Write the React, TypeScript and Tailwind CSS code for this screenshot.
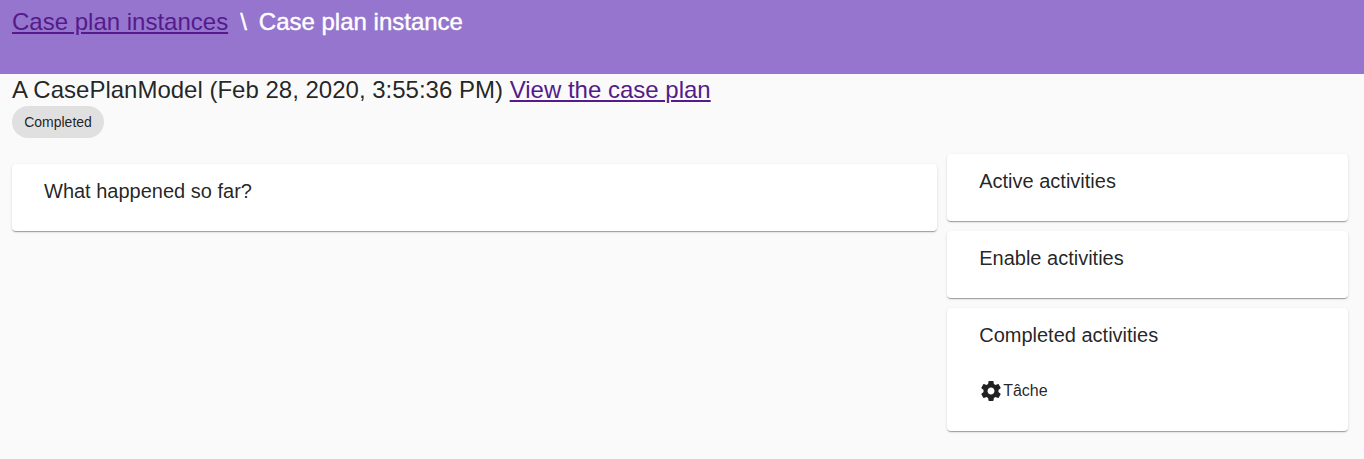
import type { ReactNode } from "react";

function GearIcon() {
  return (
    <svg viewBox="0 0 24 24" className="size-6 shrink-0" fill="currentColor" aria-hidden="true">
      <path d="M19.43 12.98c.04-.32.07-.64.07-.98s-.03-.66-.07-.98l2.11-1.65c.19-.15.24-.42.12-.64l-2-3.46c-.12-.22-.39-.3-.61-.22l-2.49 1c-.52-.4-1.08-.73-1.69-.98l-.38-2.65C14.46 2.18 14.25 2 14 2h-4c-.25 0-.46.18-.49.42l-.38 2.65c-.61.25-1.17.59-1.69.98l-2.49-1c-.23-.09-.49 0-.61.22l-2 3.46c-.13.22-.07.49.12.64l2.11 1.65c-.04.32-.07.65-.07.98s.03.66.07.98l-2.11 1.65c-.19.15-.24.42-.12.64l2 3.46c.12.22.39.3.61.22l2.49-1c.52.4 1.08.73 1.69.98l.38 2.65c.03.24.24.42.49.42h4c.25 0 .46-.18.49-.42l.38-2.65c.61-.25 1.17-.59 1.69-.98l2.49 1c.23.09.49 0 .61-.22l2-3.46c.12-.22.07-.49-.12-.64l-2.11-1.65zM12 15.5c-1.93 0-3.5-1.57-3.5-3.5s1.57-3.5 3.5-3.5 3.5 1.57 3.5 3.5-1.57 3.5-3.5 3.5z" />
    </svg>
  );
}

function Card({ title, className = "", children }: { title: string; className?: string; children?: ReactNode }) {
  return (
    <section
      className={`rounded-[4px] bg-white px-8 pt-[11px] shadow-[0_2px_1px_-1px_rgba(0,0,0,0.2),0_1px_1px_0_rgba(0,0,0,0.14),0_1px_3px_0_rgba(0,0,0,0.12)] ${className}`}
    >
      <h2 className="text-[20px] leading-8 font-normal">{title}</h2>
      {children}
    </section>
  );
}

export default function App() {
  return (
    <div className="min-h-[459px] bg-[#fafafa] font-['Liberation_Sans',Arial,sans-serif] text-black/87">
      <header className="flex h-[74px] gap-3 bg-[#9575cd] px-3 pt-1.5 text-[24px] leading-8 text-white">
        <a href="#" className="text-[#551a8b] underline">Case plan instances</a>
        <span className="[-webkit-text-stroke:0.4px_white]">\</span>
        <span className="[-webkit-text-stroke:0.4px_white]">Case plan instance</span>
      </header>
      <main className="pl-3">
        <h1 className="h-8 text-[24px] leading-8 font-normal">
          A CasePlanModel (Feb 28, 2020, 3:55:36 PM){" "}
          <a href="#" className="text-[#551a8b] underline">View the case plan</a>
        </h1>
        <div className="flex h-8 w-[92px] items-center justify-center rounded-full bg-[#e0e0e0] text-[14px]">
          Completed
        </div>
        <div className="mt-4 flex items-start gap-[10px]">
          <Card title="What happened so far?" className="mt-[10px] h-[67px] w-[925.2px] shrink-0" />
          <div className="flex w-[400.8px] shrink-0 flex-col gap-[10px]">
            <Card title="Active activities" className="h-[67px]" />
            <Card title="Enable activities" className="h-[67px]" />
            <Card title="Completed activities" className="h-[123px]">
              <div className="mt-7 flex items-center text-[16px] leading-6">
                <GearIcon />
                <span>Tâche</span>
              </div>
            </Card>
          </div>
        </div>
      </main>
    </div>
  );
}
